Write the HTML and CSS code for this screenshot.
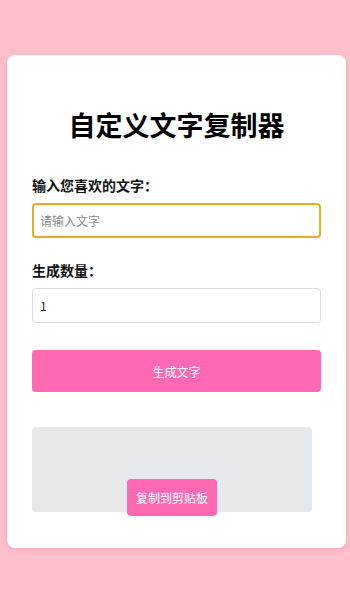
FILE: index.html
```html
<!DOCTYPE html>
<html lang="zh-CN">

<head>
  <meta charset="UTF-8">
  <meta name="viewport" content="width=device-width, initial-scale=1.0">
  <title>自定义文字复制器</title>
  <link rel="stylesheet" href="styles.css">
</head>

<body>
  <div class="card">
    <h1 class="title">自定义文字复制器</h1>

    <label class="field-label" for="text">输入您喜欢的文字：</label>
    <input class="field-input focused" id="text" type="text" placeholder="请输入文字">

    <label class="field-label second" for="count">生成数量：</label>
    <input class="field-input" id="count" type="number" value="1">

    <button type="button" class="generate">生成文字</button>

    <div class="result">
      <button type="button" class="copy">复制到剪贴板</button>
    </div>
  </div>
</body>

</html>
```

FILE: styles.css
```css
* {
  margin: 0;
  padding: 0;
  box-sizing: border-box;
}

body {
  background: #ffc0cb;
  font-family: "Noto Sans CJK SC", "Noto Sans", sans-serif;
  min-height: 600px;
  padding: 55px 4px 0 7px;
}

.card {
  background: #fff;
  border-radius: 8px;
  box-shadow: 0 2px 6px rgba(200, 100, 120, 0.25);
  padding: 52px 25px 36px;
  display: flex;
  flex-direction: column;
}

.title {
  font-size: 27px;
  line-height: 36px;
  font-weight: 700;
  text-align: center;
  color: #000;
}

.field-label {
  margin-top: 32px;
  font-size: 14px;
  line-height: 20px;
  font-weight: 700;
  color: #111;
}

.field-label.second {
  margin-top: 22px;
}

.field-input {
  margin-top: 8px;
  height: 35px;
  width: 100%;
  border: 1px solid #dcdcdc;
  border-radius: 4px;
  padding: 0 7px;
  font-family: inherit;
  font-size: 12px;
  color: #222;
  background: #fff;
  outline: none;
}

.field-input::placeholder {
  color: #8a8a8a;
}

.field-input.focused {
  border: 2px solid #e9ab27;
  padding: 0 6px;
  caret-color: #333;
}

.field-input::-webkit-outer-spin-button,
.field-input::-webkit-inner-spin-button {
  -webkit-appearance: none;
}

.generate {
  margin-top: 27px;
  height: 42px;
  width: 100%;
  border: none;
  border-radius: 4px;
  background: #ff69b4;
  color: #fff;
  font-family: inherit;
  font-size: 12px;
}

.result {
  margin-top: 35px;
  width: 280px;
  height: 85px;
  background: #e6e9ec;
  border-radius: 4px;
  display: flex;
  flex-direction: column;
  justify-content: flex-end;
  align-items: center;
}

.copy {
  margin-bottom: -4px;
  height: 37px;
  padding: 0 9px;
  border: none;
  border-radius: 4px;
  background: #ff69b4;
  color: #fff;
  font-family: inherit;
  font-size: 12px;
}
```
